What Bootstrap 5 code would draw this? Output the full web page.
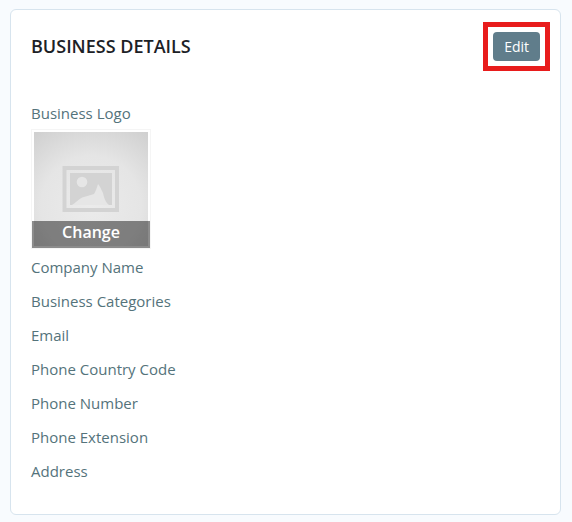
<!DOCTYPE html>
<html lang="en">
<head>
<meta charset="utf-8">
<meta name="viewport" content="width=device-width, initial-scale=1">
<title>Business Details</title>
<link rel="stylesheet" href="https://cdn.jsdelivr.net/npm/bootstrap@5.3.0/dist/css/bootstrap.min.css">
<style>
body { font-family: "Open Sans", sans-serif; font-size: 15px; line-height: 22px; background: #f8fbfe; color: #54737b; padding: 9px 11px 7px 10px; }
.details-card { border: 1px solid #d7e4ee; border-radius: 6px; padding: 12px 10px 32px 20px; }
.details-title { font-size: 18px; line-height: 24px; font-weight: 600; color: #1c2126; padding-bottom: 2px; }
.edit-frame { border: 5px solid #e81c1c; padding: 5px; }
.btn-edit { --bs-btn-color: #fff; --bs-btn-bg: #607d8b; --bs-btn-hover-color: #fff; --bs-btn-hover-bg: #546e7a; font-size: 14px; line-height: 21px; padding: 4px 11px; border: 0; border-radius: 4px; }
.details-list { margin-top: 31px; }
.detail-row { margin-bottom: 12px; }
.logo-row { margin-bottom: 7px; }
.logo-box { width: 120px; border: 1px solid #f5f5f5; padding: 2px; margin-top: 5px; }
.logo-box svg { width: 100%; }
.btn-change { left: 0; right: 0; bottom: 0; height: 27px; border: 0; padding: 0 0 6px; background: rgba(0, 0, 0, .45); color: #fff; font-size: 16px; line-height: 22px; font-weight: 600; }
</style>
</head>
<body>
<main class="details-card bg-white">
  <header class="d-flex justify-content-between align-items-center">
    <h1 class="details-title mb-0">BUSINESS DETAILS</h1>
    <div class="edit-frame d-flex"><button type="button" class="btn btn-edit">Edit</button></div>
  </header>
  <section class="details-list">
    <div class="logo-row">
      <div>Business Logo</div>
      <div class="logo-box position-relative">
        <svg class="d-block" viewBox="0 0 114 114" role="img" aria-label="Logo placeholder">
          <defs><radialGradient id="shade" cx=".5" cy=".65" r=".8"><stop offset="0" stop-color="#ebebeb"/><stop offset=".55" stop-color="#e5e5e5"/><stop offset="1" stop-color="#d0d0d0"/></radialGradient></defs>
          <rect width="114" height="114" fill="url(#shade)"/>
          <rect x="30.500" y="36" width="52.500" height="42" fill="none" stroke="#d3d3d3" stroke-width="4"/>
          <rect x="36" y="41" width="42" height="32" fill="#d3d3d3"/>
          <circle cx="48" cy="50" r="5.300" fill="#e6e6e6"/>
          <path d="M36 73H38C42 71 45 66 50 65L60 62C62 59 63 55 64 52C66 54 67 57 69 61C70 66 72 71 75 73Z" fill="#e6e6e6"/>
        </svg>
        <button type="button" class="btn-change position-absolute">Change</button>
      </div>
    </div>
    <div class="detail-row">Company Name</div>
    <div class="detail-row">Business Categories</div>
    <div class="detail-row">Email</div>
    <div class="detail-row">Phone Country Code</div>
    <div class="detail-row">Phone Number</div>
    <div class="detail-row">Phone Extension</div>
    <div>Address</div>
  </section>
</main>
<script src="https://cdn.jsdelivr.net/npm/bootstrap@5.3.0/dist/js/bootstrap.bundle.min.js"></script>
</body>
</html>
